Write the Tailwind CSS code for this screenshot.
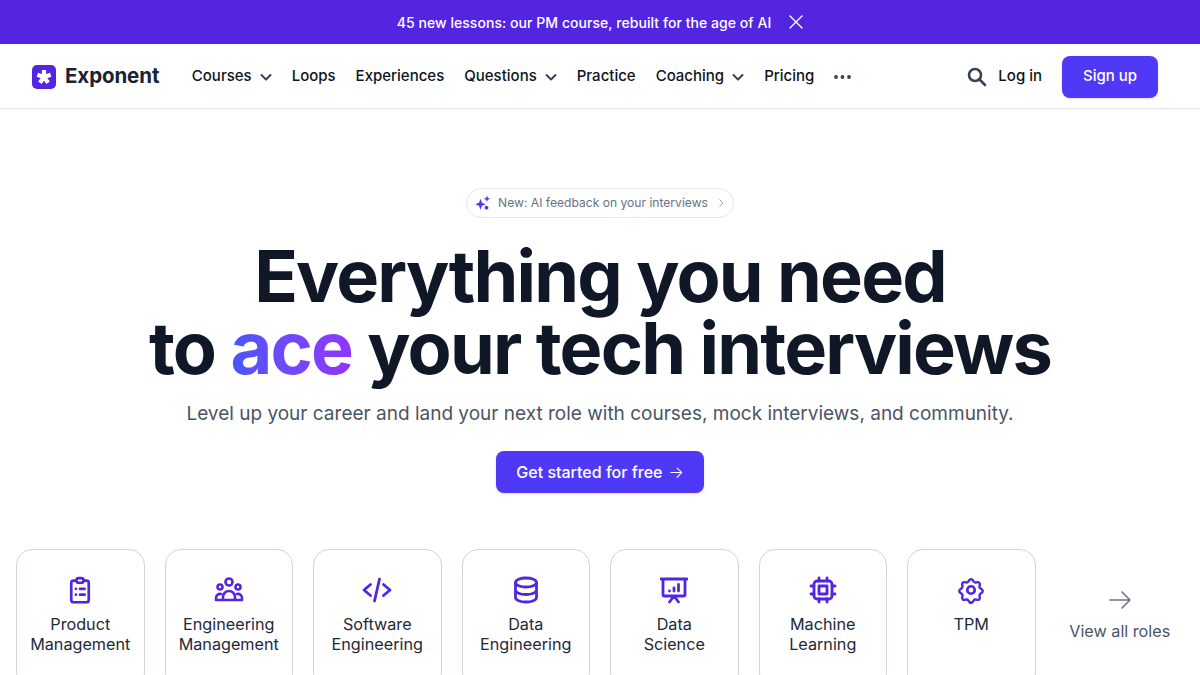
<!DOCTYPE html>
<html lang="en">
<head>
    <meta charset="UTF-8">
    <meta name="viewport" content="width=device-width, initial-scale=1.0">
    <title>Exponent</title>
    <script src="https://cdn.jsdelivr.net/npm/@tailwindcss/browser@4"></script>
</head>
<body class="bg-white h-[675px] overflow-hidden font-['Inter',sans-serif]">

    <!-- announcement -->
    <div class="h-11 bg-[#5425e0] flex items-center justify-center gap-[18px] text-white text-[14px] tracking-[0.05px] font-medium">
        <span>45 new lessons: our PM course, rebuilt for the age of AI</span>
        <svg class="w-[14px] h-[14px]" viewBox="0 0 14 14" fill="none" stroke="currentColor" stroke-width="1.4" stroke-linecap="round"><path d="M1 1l12 12M13 1L1 13"/></svg>
    </div>

    <!-- nav -->
    <header class="h-[65px] pt-px border-b border-gray-200 shadow-xs flex items-center pl-8 pr-[42px]">
        <div class="flex items-center gap-[9px]">
            <svg class="w-6 h-6" viewBox="0 0 24 24"><rect width="24" height="24" rx="5" fill="#5425e0"/><path d="M12 12V5M12 12L5.300 9.800M12 12L18.700 9.800M12 12L7.900 17.700M12 12L16.100 17.700" stroke="#fff" stroke-width="4.200" fill="none"/></svg>
            <span class="text-[20.5px] font-bold text-[#1a2233] tracking-[-0.1px]">Exponent</span>
        </div>
        <nav class="flex items-center gap-5 ml-[32.500px] text-[15px] font-medium text-[#0f1420]">
            <a class="flex items-center gap-2">Courses
                <svg class="w-3 h-3 text-gray-700" viewBox="0 0 12 12" fill="none" stroke="currentColor" stroke-width="2" stroke-linecap="round" stroke-linejoin="round"><path d="M1.500 4l4.500 4.500L10.500 4"/></svg>
            </a>
            <a>Loops</a>
            <a>Experiences</a>
            <a class="flex items-center gap-2">Questions
                <svg class="w-3 h-3 text-gray-700" viewBox="0 0 12 12" fill="none" stroke="currentColor" stroke-width="2" stroke-linecap="round" stroke-linejoin="round"><path d="M1.500 4l4.500 4.500L10.500 4"/></svg>
            </a>
            <a>Practice</a>
            <a class="flex items-center gap-2">Coaching
                <svg class="w-3 h-3 text-gray-700" viewBox="0 0 12 12" fill="none" stroke="currentColor" stroke-width="2" stroke-linecap="round" stroke-linejoin="round"><path d="M1.500 4l4.500 4.500L10.500 4"/></svg>
            </a>
            <a>Pricing</a>
            <svg class="w-[17px] h-1 text-gray-700" viewBox="0 0 17 4" fill="currentColor"><circle cx="2" cy="2" r="1.900"/><circle cx="8.500" cy="2" r="1.900"/><circle cx="15" cy="2" r="1.900"/></svg>
        </nav>
        <div class="ml-auto flex items-center">
            <svg class="w-5 h-5 text-gray-700" viewBox="0 0 20 20" fill="none" stroke="currentColor" stroke-width="2.600" stroke-linecap="round"><circle cx="8" cy="8" r="6"/><path d="M12.500 12.500l5.500 5.500"/></svg>
            <a class="ml-[11px] text-[15px] font-medium text-[#0f1420]">Log in</a>
            <a class="ml-5 w-24 h-[42px] rounded-lg bg-[#4f39f6] text-white text-[15px] font-medium flex items-center justify-center shadow-sm">Sign up</a>
        </div>
    </header>

    <!-- hero -->
    <main class="flex flex-col items-center pt-[79px]">
        <div class="h-[30px] w-[268px] rounded-full border border-gray-200 flex items-center justify-center gap-[7px] text-[12.100px] text-gray-500">
            <svg class="w-4 h-4 text-[#4f39f6]" viewBox="0 0 16 16" fill="currentColor"><path d="M5.500 3.800l1.500 4 3.700 1.500L7 10.800l-1.500 4-1.500-4L.3 9.300 4 7.800z"/><path d="M12 .5l.9 2.400 2.400.9-2.400.9L12 7.100l-.9-2.400-2.400-.9 2.400-.9z"/><circle cx="11.500" cy="12.700" r="1.900"/></svg>
            <span>New: AI feedback on your interviews</span>
            <svg class="w-2 h-2 text-gray-400 ml-0.5" viewBox="0 0 8 8" fill="none" stroke="currentColor" stroke-width="1"><path d="M2.500 0.500L6 4 2.500 7.500"/></svg>
        </div>
        <h1 class="mt-[22px] text-center text-[72px] leading-[72px] font-bold tracking-[-1.800px] text-[#101828]">
            Everything you need<br>to <span class="bg-gradient-to-r from-[#4a55fb] to-[#8f35fb] bg-clip-text text-transparent">ace</span> your tech interviews
        </h1>
        <p class="mt-4 text-[19px] leading-7 text-[#4a5565]">Level up your career and land your next role with courses, mock interviews, and community.</p>
        <a class="mt-[23px] w-52 h-[42px] rounded-lg bg-[#4f39f6] text-white font-medium flex items-center justify-center gap-[6px] shadow-sm">Get started for free <span class="font-light">→</span></a>

        <!-- roles -->
        <div class="mt-14 w-full px-4 grid grid-cols-8 gap-5">
            <a class="h-[140px] rounded-2xl border border-gray-300 flex flex-col items-center pt-[26px] px-2 text-center text-[16.200px] leading-5 text-[#1e2939]">
                <svg class="w-7 h-7 mb-[10px] text-[#5425e0]" viewBox="0 0 24 24" fill="none" stroke="currentColor" stroke-width="2.300" stroke-linecap="round" stroke-linejoin="round"><rect x="4.500" y="4" width="15" height="18.500" rx="2"/><rect x="9" y="1.800" width="6" height="4" rx="1.800" fill="#fff"/><path d="M8.500 11h.01M12 11h4M8.500 16h.01M12 16h4"/></svg>
                <span>Product<br>Management</span>
            </a>
            <a class="h-[140px] rounded-2xl border border-gray-300 flex flex-col items-center pt-[26px] px-2 text-center text-[16.200px] leading-5 text-[#1e2939]">
                <svg class="w-[30px] h-7 mb-[10px] text-[#5425e0]" viewBox="0 0 30 28" fill="none" stroke="currentColor" stroke-width="2.600" stroke-linecap="round" stroke-linejoin="round"><circle cx="15" cy="6" r="3.500"/><circle cx="6" cy="11" r="2.500"/><circle cx="24" cy="11" r="2.500"/><path d="M9 24v-3a6 6 0 0112 0v3zM9 24H2v-2a4 4 0 015-4M21 24h7v-2a4 4 0 00-5-4"/></svg>
                <span>Engineering<br>Management</span>
            </a>
            <a class="h-[140px] rounded-2xl border border-gray-300 flex flex-col items-center pt-[26px] px-2 text-center text-[16.200px] leading-5 text-[#1e2939]">
                <svg class="w-[30px] h-7 mb-[10px] text-[#5425e0]" viewBox="0 0 30 28" fill="none" stroke="currentColor" stroke-width="2.800" stroke-linecap="round" stroke-linejoin="round"><path d="M8.500 8.500L2 14l6.500 5.500M21.500 8.500L28 14l-6.500 5.500M17.500 3l-5 22"/></svg>
                <span>Software<br>Engineering</span>
            </a>
            <a class="h-[140px] rounded-2xl border border-gray-300 flex flex-col items-center pt-[26px] px-2 text-center text-[16.200px] leading-5 text-[#1e2939]">
                <svg class="w-7 h-7 mb-[10px] text-[#5425e0]" viewBox="0 0 28 28" fill="none" stroke="currentColor" stroke-width="2.800"><ellipse cx="14" cy="6.500" rx="10.500" ry="4.500"/><path d="M3.500 6.500v15c0 2.500 4.700 4.500 10.500 4.500s10.500-2 10.500-4.500v-15M3.500 14c0 2.500 4.700 4.500 10.500 4.500S24.500 16.500 24.500 14"/></svg>
                <span>Data<br>Engineering</span>
            </a>
            <a class="h-[140px] rounded-2xl border border-gray-300 flex flex-col items-center pt-[26px] px-2 text-center text-[16.200px] leading-5 text-[#1e2939]">
                <svg class="w-7 h-7 mb-[10px] text-[#5425e0]" viewBox="0 0 28 28" fill="none" stroke="currentColor" stroke-width="2.800" stroke-linecap="round" stroke-linejoin="round"><path d="M1 3h26M3 3v16a1 1 0 001 1h20a1 1 0 001-1V3M9.500 26l4.500-6 4.500 6M9.500 15v.01M14 12v3M18.500 8.500V15"/></svg>
                <span>Data<br>Science</span>
            </a>
            <a class="h-[140px] rounded-2xl border border-gray-300 flex flex-col items-center pt-[26px] px-2 text-center text-[16.200px] leading-5 text-[#1e2939]">
                <svg class="w-7 h-7 mb-[10px] text-[#5425e0]" viewBox="0 0 28 28" fill="none" stroke="currentColor" stroke-width="2.800" stroke-linecap="round" stroke-linejoin="round"><rect x="5" y="5" width="18" height="18" rx="3"/><rect x="10" y="10" width="8" height="8"/><path d="M10 2v3M18 2v3M10 23v3M18 23v3M2 10h3M2 18h3M23 10h3M23 18h3"/></svg>
                <span>Machine<br>Learning</span>
            </a>
            <a class="h-[140px] rounded-2xl border border-gray-300 flex flex-col items-center pt-[26px] px-2 text-center text-[16.200px] leading-5 text-[#1e2939]">
                <svg class="w-7 h-7 mb-[10px] text-[#5425e0]" viewBox="0 0 24 24" fill="none" stroke="currentColor" stroke-width="2.300" stroke-linecap="round" stroke-linejoin="round"><path d="M10.300 2.700a2 2 0 013.400 0l.9 1.300a2 2 0 002 .8l1.500-.3a2 2 0 012.300 2.400l-.3 1.500a2 2 0 00.8 2l1.300.9a2 2 0 010 3.400l-1.300.9a2 2 0 00-.8 2l.3 1.500a2 2 0 01-2.300 2.300l-1.500-.3a2 2 0 00-2 .8l-.9 1.300a2 2 0 01-3.400 0l-.9-1.300a2 2 0 00-2-.8l-1.500.3a2 2 0 01-2.300-2.300l.3-1.500a2 2 0 00-.8-2l-1.300-.9a2 2 0 010-3.400l1.300-.9a2 2 0 00.8-2l-.3-1.500a2 2 0 012.300-2.400l1.500.3a2 2 0 002-.8z" transform="translate(1.200 1.200) scale(.9)"/><circle cx="12" cy="12" r="3.200"/></svg>
                <span>TPM</span>
            </a>
            <a class="flex flex-col items-center pt-[39px] text-[16.200px] leading-5 text-[#4a5565]">
                <svg class="w-6 h-6 mb-[9px] text-gray-500" viewBox="0 0 24 24" fill="none" stroke="currentColor" stroke-width="1.600" stroke-linecap="round" stroke-linejoin="round"><path d="M2 12h20M14 4l8 8-8 8"/></svg>
                <span>View all roles</span>
            </a>
        </div>
    </main>

</body>
</html>
